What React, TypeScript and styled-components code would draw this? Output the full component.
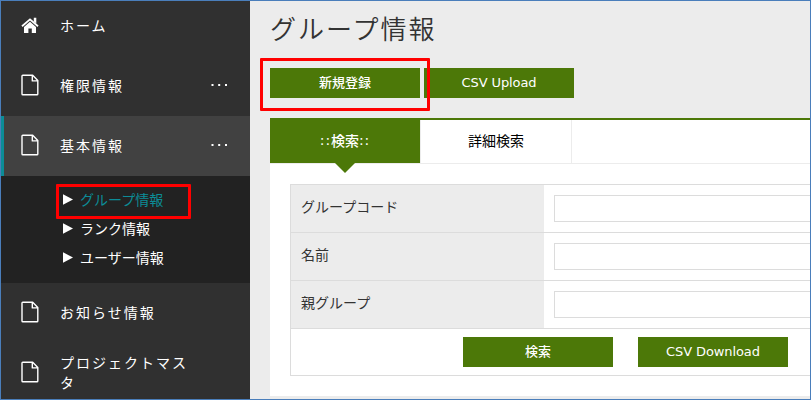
import React from "react";
import styled, { createGlobalStyle, css } from "styled-components";

const GREEN = "#4c7808";
const LINE = "#dcdcdc";

const GlobalStyle = createGlobalStyle`
  *, *::before, *::after { box-sizing: border-box; }
  html, body { margin: 0; padding: 0; overflow: hidden; }
  body { font-family: "DejaVu Sans", "Noto Sans CJK JP", sans-serif; color: #333; }
`;

const Frame = styled.div`
  position: relative;
  display: flex;
  width: 811px;
  height: 400px;
  border: 1px solid #4a7ebb;
  background: #ececec;
  overflow: hidden;
`;

const Sidebar = styled.nav`
  flex: 0 0 249px;
  background: #303030;
  color: #fff;
  font-family: "Noto Sans CJK JP", sans-serif;
`;

const MenuRow = styled.div<{ $active?: boolean; $first?: boolean }>`
  display: flex;
  align-items: center;
  height: ${(p) => (p.$first ? 55 : 60)}px;
  padding: ${(p) => (p.$first ? "0 20px 7px 17px" : "0 20px 2px 17px")};
  border-left: 3px solid ${(p) => (p.$active ? "#0c8c97" : "transparent")};
  background: ${(p) => (p.$active ? "#414141" : "#303030")};
`;

const MenuIcon = styled.svg`
  flex: none;
  width: 18px;
  height: 22px;
  display: block;
`;

const MenuLabel = styled.span`
  width: 136px;
  margin-left: 21px;
  font-size: 14px;
  line-height: 20px;
  letter-spacing: 2px;
`;

const Dots = styled.svg`
  width: 18px;
  height: 4px;
  margin-left: auto;
  margin-right: 1px;
`;

const SubMenu = styled.ul`
  margin: 0;
  height: 107px;
  padding: 9px 0 0 62px;
  list-style: none;
  background: #222;
`;

const SubItem = styled.li<{ $current?: boolean }>`
  display: flex;
  align-items: center;
  height: 29px;
  padding-bottom: 2px;
  font-size: 14px;
  color: ${(p) => (p.$current ? "#0c8c97" : "#fff")};
`;

const Arrow = styled.svg`
  width: 10px;
  height: 11px;
  margin: 2px 7px 0 0;
  fill: #fff;
`;

const Main = styled.main`
  flex: none;
  width: 1000px;
  padding: 8px 0 0 20px;
`;

const Title = styled.h1`
  margin: 0;
  height: 38px;
  font: 350 26px/38px "Noto Sans CJK JP", sans-serif;
  letter-spacing: 2px;
  color: #333;
`;

const Toolbar = styled.div`
  display: flex;
  gap: 4px;
  margin-top: 21px;
`;

const Button = styled.button`
  width: 150px;
  height: 30px;
  padding: 0 0 1px;
  border: 0;
  background: ${GREEN};
  color: #fff;
  font: 500 13px/20px "DejaVu Sans", "Noto Sans CJK JP", sans-serif;
  letter-spacing: 0;
`;

const LatinText = styled.span`
  font-size: 13px;
  letter-spacing: -0.1px;
`;

const Panel = styled.section`
  margin-top: 20px;
  height: 278px;
  border-top: 2px solid ${GREEN};
  background: #fff;
`;

const Tabs = styled.div`
  display: flex;
  height: 44px;
  border-bottom: 1px solid #ececec;
`;

const Tab = styled.div<{ $selected?: boolean }>`
  position: relative;
  display: flex;
  align-items: center;
  justify-content: center;
  width: ${(p) => (p.$selected ? 150 : 152)}px;
  height: 43px;
  padding-bottom: 3px;
  font: 14px/20px "Noto Sans CJK JP", sans-serif;
  ${(p) =>
    p.$selected
      ? css`
          background: ${GREEN};
          color: #fff;
          font-weight: 500;
          &::after {
            content: "";
            position: absolute;
            top: 43px;
            left: 65px;
            border: 10px solid transparent;
            border-top-color: ${GREEN};
            border-bottom: 0;
          }
        `
      : css`
          color: #000;
          border-left: 1px solid #ececec;
          border-right: 1px solid #ececec;
        `}
`;

const Colons = styled.span`
  font-family: "DejaVu Sans", sans-serif;
  font-weight: 400;
  letter-spacing: 0.9px;
`;

const Form = styled.div`
  width: 760px;
  margin: 20px 0 0 20px;
  border: 1px solid ${LINE};
`;

const FieldRow = styled.label`
  display: flex;
  height: 48px;
  border-bottom: 1px solid ${LINE};
`;

const FieldName = styled.span`
  width: 253px;
  padding: 11px 10px 0;
  background: #ececec;
  color: #333;
  font: 14px/20px "Noto Sans CJK JP", sans-serif;
`;

const Field = styled.input`
  width: 400px;
  height: 27px;
  margin: 10px;
  border: 1px solid ${LINE};
  background: #fff;
`;

const Actions = styled.div`
  display: flex;
  gap: 25px;
  height: 46px;
  padding: 8px 0 0 172px;
`;

const Highlight = styled.div<{ $x: number; $y: number; $w: number; $h: number }>`
  position: absolute;
  left: ${(p) => p.$x - 1}px;
  top: ${(p) => p.$y - 1}px;
  width: ${(p) => p.$w}px;
  height: ${(p) => p.$h}px;
  border: 3px solid #f00;
  border-radius: 1px;
  pointer-events: none;
`;

const HomeIcon = () => (
  <MenuIcon viewBox="0 0 18 22">
    <path d="M1 12.2 9 5.4l8 6.8" fill="none" stroke="#fff" strokeWidth="1.8" />
    <path d="M12.8 3.8h2.5v5.8l-2.5-2.2zM9 7.8l6 5.1V19h-4.2v-4.6H7.4V19H3v-6.1z" fill="#fff" />
  </MenuIcon>
);

const FileIcon = () => (
  <MenuIcon viewBox="0 0 18 22">
    <path
      d="M1.8 1.3h9.9l5.1 5.2v13.4q0 .8-.8.8H1.8q-.8 0-.8-.8V2.1q0-.8.8-.8zM11.3 1.3v5.6h5.5"
      fill="none"
      stroke="#fff"
      strokeWidth="1.4"
      strokeLinejoin="round"
    />
  </MenuIcon>
);

const MoreDots = () => (
  <Dots viewBox="0 0 18 4" fill="#fff">
    <rect x="0.5" y="1" width="2" height="2" />
    <rect x="7.2" y="1" width="2" height="2" />
    <rect x="14" y="1" width="2" height="2" />
  </Dots>
);

const subItems = ["グループ情報", "ランク情報", "ユーザー情報"];
const fields = ["グループコード", "名前", "親グループ"];

export default function App() {
  return (
    <>
      <GlobalStyle />
      <Frame>
        <Sidebar>
          <MenuRow $first>
            <HomeIcon />
            <MenuLabel>ホーム</MenuLabel>
          </MenuRow>
          <MenuRow>
            <FileIcon />
            <MenuLabel>権限情報</MenuLabel>
            <MoreDots />
          </MenuRow>
          <MenuRow $active>
            <FileIcon />
            <MenuLabel>基本情報</MenuLabel>
            <MoreDots />
          </MenuRow>
          <SubMenu>
            {subItems.map((name, i) => (
              <SubItem key={name} $current={i === 0}>
                <Arrow viewBox="0 0 10 11">
                  <path d="M0 0.3 10 5.5 0 10.7z" />
                </Arrow>
                {name}
              </SubItem>
            ))}
          </SubMenu>
          <MenuRow>
            <FileIcon />
            <MenuLabel>お知らせ情報</MenuLabel>
          </MenuRow>
          <MenuRow>
            <FileIcon />
            <MenuLabel>プロジェクトマスタ</MenuLabel>
          </MenuRow>
        </Sidebar>
        <Main>
          <Title>グループ情報</Title>
          <Toolbar>
            <Button>新規登録</Button>
            <Button>
              <LatinText>CSV Upload</LatinText>
            </Button>
          </Toolbar>
          <Panel>
            <Tabs>
              <Tab $selected>
                <Colons>::</Colons>検索<Colons>::</Colons>
              </Tab>
              <Tab>詳細検索</Tab>
            </Tabs>
            <Form>
              {fields.map((name) => (
                <FieldRow key={name}>
                  <FieldName>{name}</FieldName>
                  <Field />
                </FieldRow>
              ))}
              <Actions>
                <Button>検索</Button>
                <Button>
                  <LatinText>CSV Download</LatinText>
                </Button>
              </Actions>
            </Form>
          </Panel>
        </Main>
        <Highlight $x={260} $y={58} $w={170} $h={53} />
        <Highlight $x={56} $y={184} $w={135} $h={35} />
      </Frame>
    </>
  );
}
